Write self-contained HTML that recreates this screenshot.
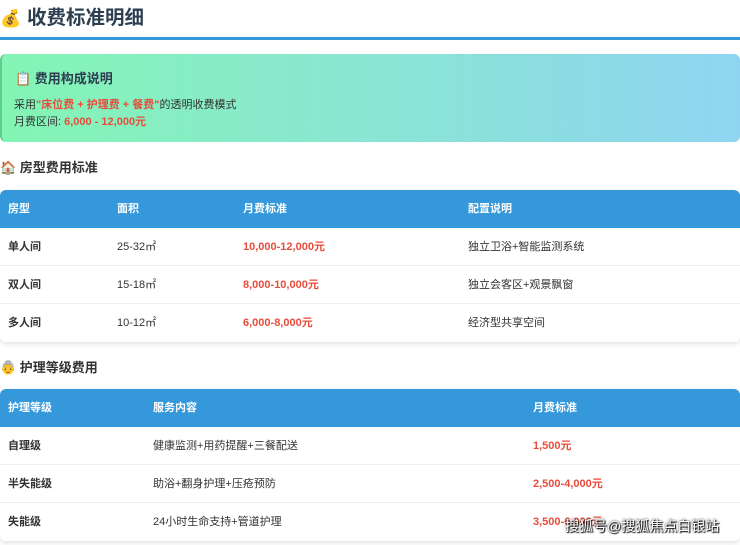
<!DOCTYPE html>
<html><head><meta charset="utf-8"><style>
*{margin:0;padding:0;box-sizing:border-box}
body{width:740px;height:545px;overflow:hidden;background:#fff;font-family:"Liberation Sans","Noto Sans CJK SC",sans-serif;color:#333;position:relative}
h1{position:absolute;left:0;top:4px;font-size:19.5px;font-weight:bold;color:#2c3e50;height:28px;line-height:28px}
h1 i{font-style:normal;font-size:17px;display:inline-block;width:27px}
.line{position:absolute;left:0;top:37px;width:740px;height:3px;background:#3498db}
.info{position:absolute;left:0;top:54px;width:740px;height:88px;border-radius:6px;background:linear-gradient(90deg,#84f5b4,#8fd5f2);border-left:2px solid #5ccf8a}
.info h3{position:absolute;left:13px;top:14px;font-size:13px;font-weight:bold;color:#2c3e50}
.info p{position:absolute;left:12px;font-size:11px;color:#333}
.r{color:#e74c3c;font-weight:bold}
h2{position:absolute;left:0;font-size:13px;font-weight:bold;color:#333}
.tbl{position:absolute;left:0;width:740px;border-radius:6px;overflow:hidden;box-shadow:0 2px 6px rgba(0,0,0,.12);background:#fff}
.row{position:relative;height:38px;border-bottom:1px solid #eee;font-size:11px}
.row span{position:absolute;top:0;line-height:38px}
.hd{background:#3498db;color:#fff;font-weight:bold;border:none}
.b{font-weight:bold;color:#333}
.p{color:#e74c3c;font-weight:bold}
.wm{position:absolute;left:565px;top:516px;font-size:14px;color:#fff;text-shadow:0 0 2px #000,1px 1px 1px #000}
</style></head><body>
<h1><i>💰</i>收费标准明细</h1>
<div class="line"></div>
<div class="info">
<h3>📋 费用构成说明</h3>
<p style="top:42px">采用<span class="r">"床位费 + 护理费 + 餐费"</span>的透明收费模式</p>
<p style="top:59px">月费区间: <span class="r">6,000 - 12,000元</span></p>
</div>
<h2 style="top:157px">🏠 房型费用标准</h2>
<div class="tbl" style="top:190px">
<div class="row hd"><span style="left:8px">房型</span><span style="left:117px">面积</span><span style="left:243px">月费标准</span><span style="left:468px">配置说明</span></div>
<div class="row"><span style="left:8px" class="b">单人间</span><span style="left:117px">25-32㎡</span><span style="left:243px" class="p">10,000-12,000元</span><span style="left:468px">独立卫浴+智能监测系统</span></div>
<div class="row"><span style="left:8px" class="b">双人间</span><span style="left:117px">15-18㎡</span><span style="left:243px" class="p">8,000-10,000元</span><span style="left:468px">独立会客区+观景飘窗</span></div>
<div class="row" style="border:none"><span style="left:8px" class="b">多人间</span><span style="left:117px">10-12㎡</span><span style="left:243px" class="p">6,000-8,000元</span><span style="left:468px">经济型共享空间</span></div>
</div>
<h2 style="top:357px">👵 护理等级费用</h2>
<div class="tbl" style="top:389px">
<div class="row hd"><span style="left:8px">护理等级</span><span style="left:153px">服务内容</span><span style="left:533px">月费标准</span></div>
<div class="row"><span style="left:8px" class="b">自理级</span><span style="left:153px">健康监测+用药提醒+三餐配送</span><span style="left:533px" class="p">1,500元</span></div>
<div class="row"><span style="left:8px" class="b">半失能级</span><span style="left:153px">助浴+翻身护理+压疮预防</span><span style="left:533px" class="p">2,500-4,000元</span></div>
<div class="row" style="border:none"><span style="left:8px" class="b">失能级</span><span style="left:153px">24小时生命支持+管道护理</span><span style="left:533px" class="p">3,500-6,000元</span></div>
</div>
<div class="wm">搜狐号@搜狐焦点白银站</div>
</body></html>
